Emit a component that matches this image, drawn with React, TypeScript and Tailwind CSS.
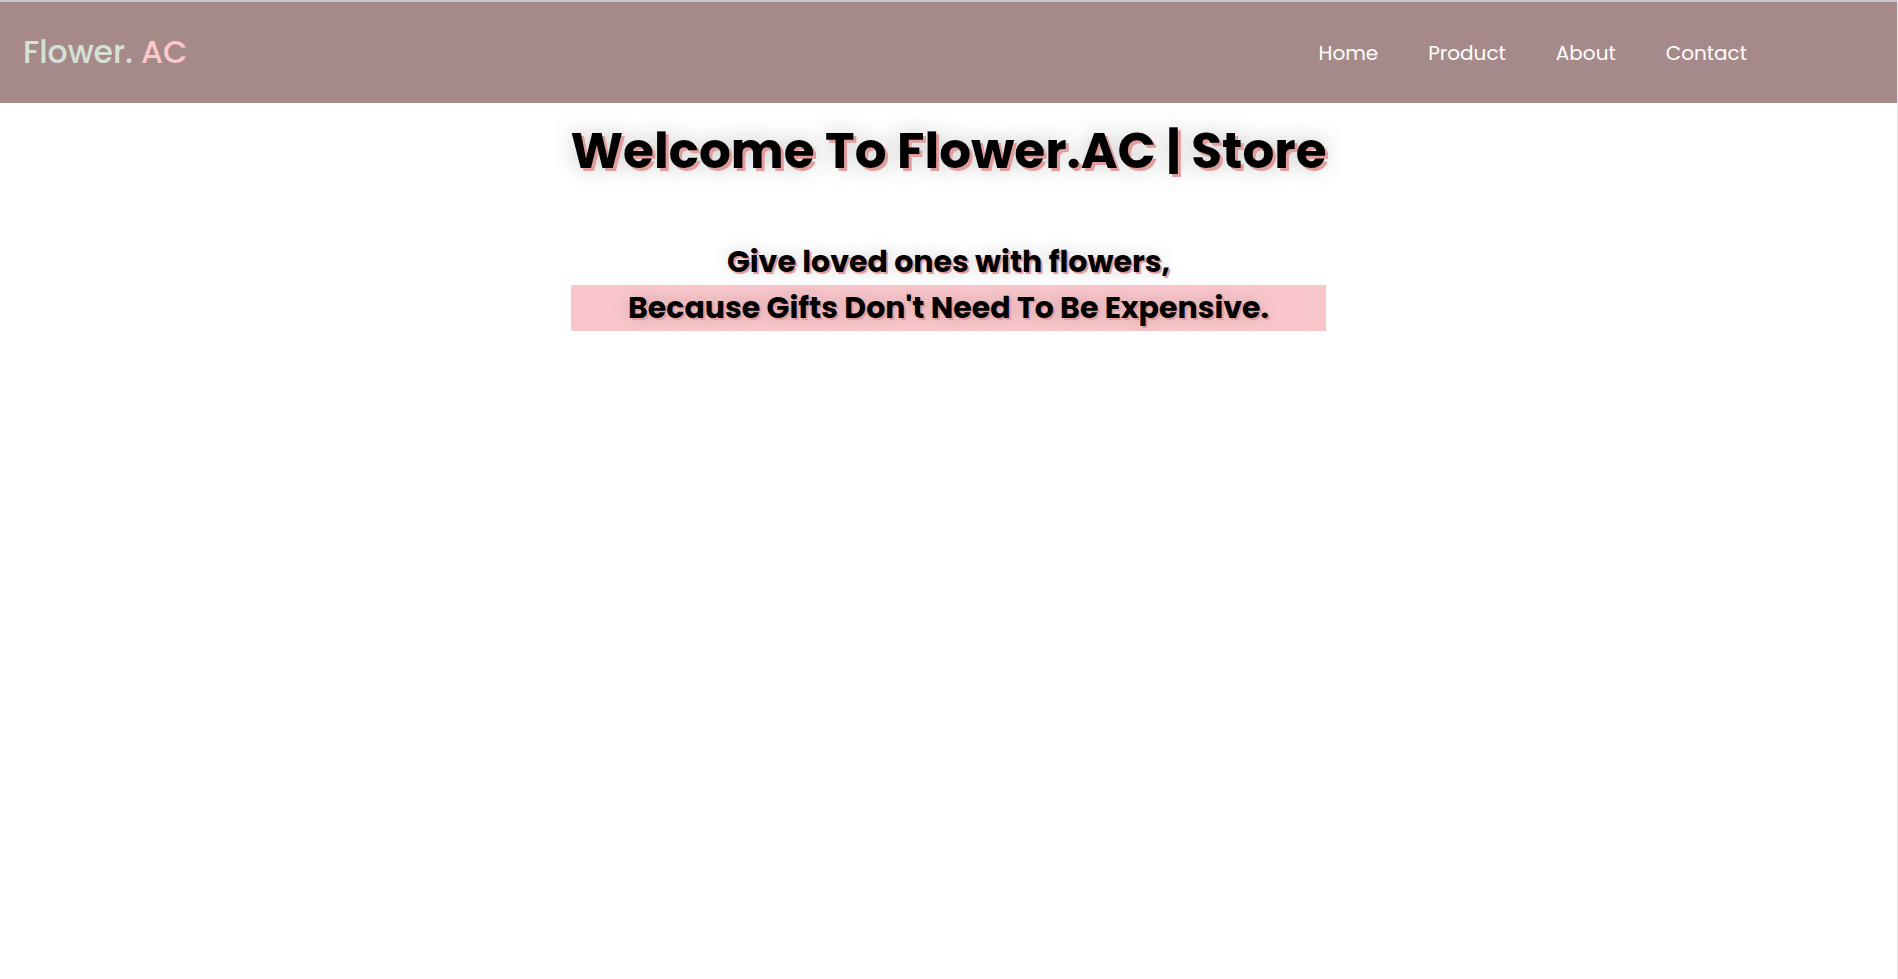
const font = "font-['Poppins','Inter','Liberation_Sans',sans-serif]";

const links = ["Home", "Product", "About", "Contact"];

export default function App() {
  return (
    <div className={`min-h-screen bg-white border-r border-[#e4e4e4] ${font}`}>
      <div className="h-[2px] bg-[#c6c6cc]" />
      <nav className="h-[101px] bg-[#a68a8a] flex items-center justify-between pl-[23px] pr-[150px]">
        <div className="text-[31.5px] font-medium leading-none">
          <span className="text-[#d4e2d6]">Flower.</span>{" "}
          <span className="text-[#ffc8cb]">AC</span>
        </div>
        <ul className="flex items-center gap-[50px] text-[20px] text-white">
          {links.map((l) => (
            <li key={l}>
              <a href="#" className="hover:opacity-70">{l}</a>
            </li>
          ))}
        </ul>
      </nav>

      <section className="w-fit mx-auto text-center text-black">
        <h1 className="mt-[18px] text-[50px] leading-[60px] font-bold [text-shadow:3px_3px_0_#e39c9c,0_0_22px_rgba(0,0,0,0.25)]">
          Welcome To Flower.AC | Store
        </h1>
        <p className="mt-[58px] text-[30px] leading-[46px] font-bold [text-shadow:2px_2px_0_#e39c9c,0_0_18px_rgba(0,0,0,0.2)]">
          Give loved ones with flowers,
        </p>
        <p className="bg-[#f9c7cb] text-[30px] leading-[46px] font-bold [text-shadow:2px_2px_0_#e39c9c,0_0_18px_rgba(0,0,0,0.2)]">
          Because Gifts Don't Need To Be Expensive.
        </p>
      </section>
    </div>
  );
}
